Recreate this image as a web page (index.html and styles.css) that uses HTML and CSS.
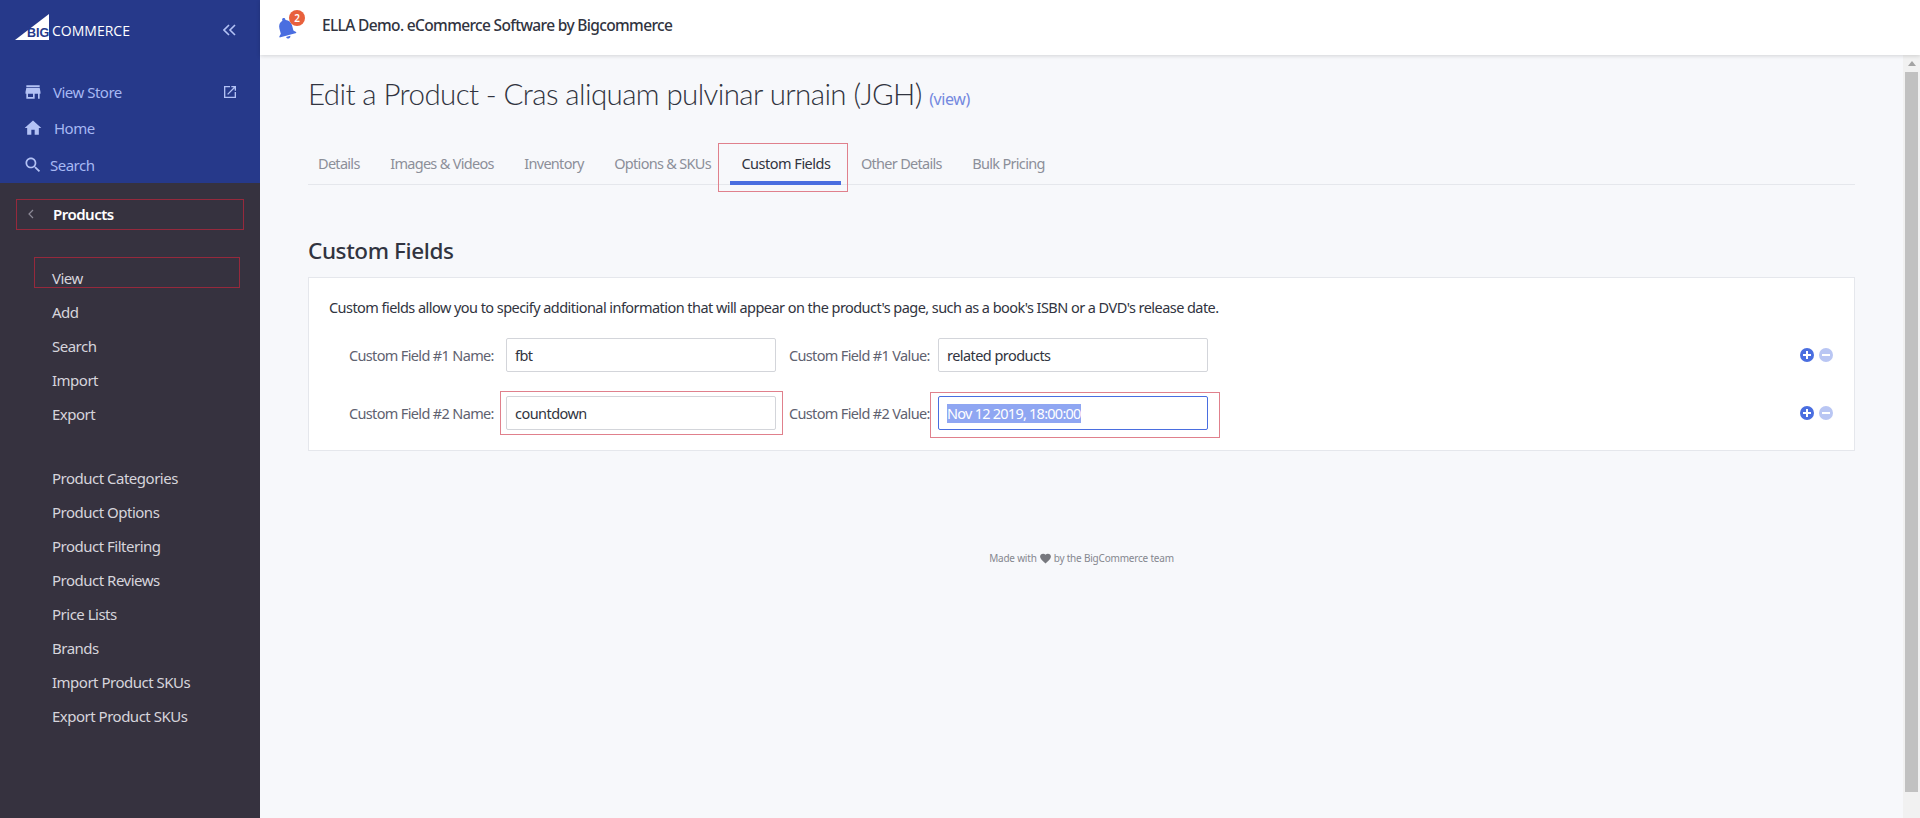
FILE: index.html
```html
<!DOCTYPE html>
<html lang="en">
<head>
    <meta charset="UTF-8">
    <meta name="viewport" content="width=device-width, initial-scale=1.0">
    <title>Edit a Product</title>
    <link rel="stylesheet" href="styles.css">
</head>
<body>
    <aside class="sidebar">
        <div class="sidebar-top">
            <div class="brand">
                <svg class="logo" width="125" height="30" viewBox="0 0 125 30">
                    <polygon points="0,26 34,0 34,26" fill="#fff"/>
                    <text x="12" y="22.5" class="logo-big">BIG</text>
                    <text x="37" y="22" class="logo-commerce">COMMERCE</text>
                </svg>
                <svg class="collapse" width="13" height="12" viewBox="0 0 13 12">
                    <path d="M6 1 1 6l5 5M12 1 7 6l5 5" fill="none" stroke="#b3c2f5" stroke-width="1.6"/>
                </svg>
            </div>
            <ul class="top-nav">
                <li class="top-item store">
                    <svg class="top-icon" viewBox="0 0 24 24"><path d="M20 4H4v2h16V4zm1 10v-2l-1-5H4l-1 5v2h1v6h10v-6h4v6h2v-6h1zm-9 4H6v-4h6v4z"/></svg>
                    <span>View Store</span>
                    <svg class="open-icon" viewBox="0 0 24 24"><path d="M19 19H5V5h7V3H3v18h18v-9h-2v7zM14 3v2h3.590l-9.830 9.830 1.410 1.410L19 6.410V10h2V3h-7z"/></svg>
                </li>
                <li class="top-item home">
                    <svg class="top-icon" viewBox="0 0 24 24"><path d="M10 20v-6h4v6h5v-8h3L12 3 2 12h3v8z"/></svg>
                    <span>Home</span>
                </li>
                <li class="top-item find">
                    <svg class="top-icon" viewBox="0 0 24 24"><path d="M15.500 14h-.79l-.28-.27C15.410 12.590 16 11.110 16 9.500 16 5.910 13.090 3 9.500 3S3 5.910 3 9.500 5.910 16 9.500 16c1.610 0 3.090-.59 4.230-1.570l.27.28v.79l5 4.990L20.490 19l-4.990-5zm-6 0C7.010 14 5 11.990 5 9.500S7.010 5 9.500 5 14 7.010 14 9.500 11.990 14 9.500 14z"/></svg>
                    <span>Search</span>
                </li>
            </ul>
        </div>
        <div class="sidebar-sub">
            <div class="sub-title">
                <svg class="back" width="6" height="10" viewBox="0 0 6 10"><path d="M5 1 1 5l4 4" fill="none" stroke="#8d8a97" stroke-width="1.2"/></svg>
                <span>Products</span>
            </div>
            <ul class="sub-nav">
                <li>View</li>
                <li>Add</li>
                <li>Search</li>
                <li>Import</li>
                <li>Export</li>
            </ul>
            <ul class="sub-nav">
                <li>Product Categories</li>
                <li>Product Options</li>
                <li>Product Filtering</li>
                <li>Product Reviews</li>
                <li>Price Lists</li>
                <li>Brands</li>
                <li>Import Product SKUs</li>
                <li>Export Product SKUs</li>
            </ul>
        </div>
    </aside>

    <div class="main">
        <header class="topbar">
            <div class="bell">
                <svg width="26" height="26" viewBox="0 0 24 24"><path d="M12 22c1.100 0 2-.9 2-2h-4c0 1.100.9 2 2 2zm6-6v-5c0-3.070-1.630-5.640-4.500-6.320V4c0-.83-.67-1.500-1.500-1.500s-1.500.67-1.500 1.500v.68C7.640 5.360 6 7.920 6 11v5l-2 2v1h16v-1l-2-2z"/></svg>
                <span class="badge">2</span>
            </div>
            <div class="store-name">ELLA Demo. eCommerce Software by Bigcommerce</div>
        </header>

        <div class="body-row">
            <main class="content">
                <h1>Edit a Product - Cras aliquam pulvinar urnain (JGH) <a class="view-link">(view)</a></h1>
                <nav class="tabs">
                    <span class="tab">Details</span>
                    <span class="tab">Images &amp; Videos</span>
                    <span class="tab">Inventory</span>
                    <span class="tab">Options &amp; SKUs</span>
                    <span class="tab active">Custom Fields</span>
                    <span class="tab">Other Details</span>
                    <span class="tab">Bulk Pricing</span>
                </nav>
                <h2>Custom Fields</h2>
                <section class="panel">
                    <p class="panel-intro">Custom fields allow you to specify additional information that will appear on the product's page, such as a book's ISBN or a DVD's release date.</p>
                    <div class="field-row">
                        <label class="name-label">Custom Field #1 Name:</label>
                        <div class="field name-field">fbt</div>
                        <label class="value-label">Custom Field #1 Value:</label>
                        <div class="field value-field">related products</div>
                        <div class="row-actions">
                            <span class="round plus"></span>
                            <span class="round minus"></span>
                        </div>
                    </div>
                    <div class="field-row">
                        <label class="name-label">Custom Field #2 Name:</label>
                        <div class="field name-field">countdown</div>
                        <label class="value-label">Custom Field #2 Value:</label>
                        <div class="field value-field focused"><span class="selected">Nov 12 2019, 18:00:00</span></div>
                        <div class="row-actions">
                            <span class="round plus"></span>
                            <span class="round minus"></span>
                        </div>
                    </div>
                </section>
                <footer class="made-with">
                    Made with
                    <svg width="13" height="13" viewBox="0 0 24 24"><path d="M12 21.350l-1.450-1.320C5.400 15.360 2 12.280 2 8.500 2 5.420 4.420 3 7.500 3c1.740 0 3.410.81 4.500 2.090C13.090 3.810 14.760 3 16.500 3 19.580 3 22 5.420 22 8.500c0 3.780-3.400 6.860-8.550 11.540L12 21.350z"/></svg>
                    by the BigCommerce team
                </footer>
            </main>
            <div class="scrollbar">
                <span class="scroll-arrow"></span>
                <span class="scroll-thumb"></span>
            </div>
        </div>
    </div>

    <!-- red boxes drawn over the shot -->
    <div class="mark mark-products"></div>
    <div class="mark mark-view"></div>
    <div class="mark mark-tab"></div>
    <div class="mark mark-name"></div>
    <div class="mark mark-value"></div>
</body>
</html>
```

FILE: styles.css
```css
* {
    box-sizing: border-box;
}
html, body {
    height: 100%;
}
body {
    margin: 0;
    display: flex;
    overflow: hidden;
    font-family: "Noto Sans", Arial, sans-serif;
    font-size: 14.500px;
    letter-spacing: -0.55px;
    color: #313440;
    background-color: #f7f8fb;
}
ul {
    list-style: none;
    margin: 0;
    padding: 0;
}

/* sidebar */
.sidebar {
    width: 260px;
    flex-shrink: 0;
    display: flex;
    flex-direction: column;
    font-size: 15px;
    letter-spacing: -0.5px;
    background-color: #36323f;
}
.sidebar-top {
    height: 183px;
    background-color: #26398a;
}
.brand {
    height: 74px;
    padding: 14px 24px 0 15px;
    display: flex;
    justify-content: space-between;
    align-items: flex-start;
}
.logo-big {
    font-family: "Liberation Sans", Arial, sans-serif;
    font-size: 12.500px;
    font-weight: 700;
    letter-spacing: 0;
    fill: #26398a;
}
.logo-commerce {
    font-family: "Open Sans", Arial, sans-serif;
    font-size: 14px;
    letter-spacing: 0;
    fill: #fff;
}
.collapse {
    margin-top: 10px;
}
.top-nav {
    padding: 0 22px 0 23px;
}
.top-item {
    height: 36.500px;
    display: flex;
    align-items: center;
    color: #a6b8f3;
}
.top-icon {
    width: 20px;
    height: 20px;
    fill: #b3c2f5;
}
.store span {
    margin-left: 10px;
}
.home {
    margin-top: -1px;
}
.home span {
    margin-left: 11px;
}
.find {
    margin-top: 1px;
}
.find span {
    margin-left: 7px;
}
.open-icon {
    width: 16px;
    height: 16px;
    margin-left: auto;
    fill: #b3c2f5;
}
.sidebar-sub {
    flex: 1;
    padding-top: 16px;
}
.sub-title {
    height: 30px;
    padding-left: 28px;
    display: flex;
    align-items: center;
    gap: 19px;
    color: #fff;
    font-weight: 600;
}
.sub-nav {
    padding: 32px 0 0 52px;
    color: #d6d5dc;
}
.sub-nav + .sub-nav {
    padding-top: 30px;
}
.sub-nav li {
    height: 34px;
    line-height: 34px;
}

/* top bar */
.main {
    flex: 1;
    min-width: 0;
    display: flex;
    flex-direction: column;
}
.topbar {
    height: 55px;
    flex-shrink: 0;
    display: flex;
    align-items: center;
    padding-left: 13px;
    background-color: #fff;
    box-shadow: 0 1px 4px rgba(0, 0, 0, 0.15);
    position: relative;
}
.bell {
    position: relative;
    width: 49px;
    height: 26px;
}
.bell svg {
    display: block;
    fill: #4a6ee0;
    transform: rotate(-15deg);
}
.badge {
    position: absolute;
    left: 16px;
    top: -5px;
    width: 16px;
    height: 16px;
    border-radius: 50%;
    background-color: #e8603c;
    color: #fff;
    font-size: 10px;
    font-weight: 600;
    line-height: 16px;
    text-align: center;
    letter-spacing: 0;
}
.store-name {
    margin-bottom: 5px;
    font-size: 15.500px;
    font-weight: 500;
    letter-spacing: -0.65px;
}

/* content */
.body-row {
    flex: 1;
    min-height: 0;
    display: flex;
}
.content {
    flex: 1;
    min-width: 0;
    padding: 0 48px 0 48px;
}
h1 {
    margin: 16px 0 0;
    height: 46px;
    font-family: "Lato", "Noto Sans", sans-serif;
    font-size: 29.500px;
    font-weight: 300;
    line-height: 46px;
    color: #313440;
    letter-spacing: -0.6px;
}
.view-link {
    font-family: "Noto Sans", Arial, sans-serif;
    font-size: 16px;
    font-weight: 400;
    color: #7489e0;
    letter-spacing: -0.4px;
}
.tabs {
    margin-top: 24px;
    height: 44px;
    padding-left: 10px;
    display: flex;
    gap: 30.500px;
    border-bottom: 1px solid #e5e7ec;
    letter-spacing: -0.7px;
}
.tab {
    height: 44px;
    line-height: 44px;
    color: #8c8f99;
}
.tab.active {
    position: relative;
    letter-spacing: -0.5px;
    color: #313440;
}
.tab.active::after {
    content: "";
    position: absolute;
    left: -11px;
    right: -11px;
    bottom: 0;
    height: 4px;
    background-color: #4a6ee0;
}
h2 {
    margin: 52px 0 0;
    height: 40px;
    font-size: 22.500px;
    font-weight: 500;
    line-height: 28px;
    color: #313440;
    letter-spacing: -0.4px;
}
.panel {
    height: 174px;
    padding: 18px 20px 0;
    background-color: #fff;
    border: 1px solid #e5e7ec;
}
.panel-intro {
    margin: 0;
    height: 42px;
    line-height: 22px;
}
.field-row {
    height: 34px;
    margin-bottom: 24px;
    display: flex;
    align-items: center;
}
.name-label,
.value-label {
    flex-shrink: 0;
    white-space: nowrap;
    color: #5f6270;
    letter-spacing: -0.65px;
}
.name-label {
    width: 177px;
    padding-left: 20px;
}
.value-label {
    width: 162px;
    padding-left: 13px;
}
.field {
    flex-shrink: 0;
    height: 34px;
    padding: 0 8px;
    line-height: 33px;
    background-color: #fff;
    border: 1px solid #d3d5da;
    border-radius: 2px;
}
.name-field {
    width: 270px;
}
.value-field {
    width: 270px;
}
.field.focused {
    border-color: #4a6ee0;
}
.selected {
    display: inline-block;
    line-height: 19px;
    letter-spacing: -0.75px;
    background-color: #8fa6f2;
    color: #fff;
}
.row-actions {
    margin-left: auto;
    margin-right: 1px;
    display: flex;
    gap: 5px;
}
.round {
    position: relative;
    width: 14px;
    height: 14px;
    border-radius: 50%;
}
.round::before,
.plus::after {
    content: "";
    position: absolute;
    background-color: #fff;
}
.round::before {
    left: 3px;
    top: 6px;
    width: 8px;
    height: 2px;
}
.plus::after {
    left: 6px;
    top: 3px;
    width: 2px;
    height: 8px;
}
.plus {
    background-color: #4a6ee0;
}
.minus {
    background-color: #b9c6f3;
}
.made-with {
    margin-top: 100px;
    display: flex;
    justify-content: center;
    align-items: center;
    gap: 2px;
    font-size: 10px;
    letter-spacing: -0.2px;
    color: #85878f;
}
.made-with svg {
    fill: #77787e;
}

/* page scrollbar */
.scrollbar {
    width: 17px;
    flex-shrink: 0;
    padding: 6px 0 26px 2px;
    display: flex;
    flex-direction: column;
    align-items: flex-start;
    background-color: #f1f1f1;
}
.scroll-arrow {
    margin: 0 0 0 3px;
    border-left: 4px solid transparent;
    border-right: 4px solid transparent;
    border-bottom: 5px solid #a3a3a3;
}
.scroll-thumb {
    flex: 1;
    width: 13px;
    margin-top: 6px;
    background-color: #c1c1c1;
}

/* annotation boxes */
.mark {
    position: absolute;
    border: 1px solid #96293c;
}
.mark-products {
    left: 16px;
    top: 199px;
    width: 228px;
    height: 31px;
}
.mark-view {
    left: 34px;
    top: 257px;
    width: 206px;
    height: 31px;
}
.mark-tab {
    left: 718px;
    top: 143px;
    width: 130px;
    height: 49px;
    border-color: #e0808c;
}
.mark-name {
    left: 500px;
    top: 391px;
    width: 283px;
    height: 44px;
    border-color: #e0808c;
}
.mark-value {
    left: 930px;
    top: 392px;
    width: 290px;
    height: 46px;
    border-color: #e0808c;
}
```
